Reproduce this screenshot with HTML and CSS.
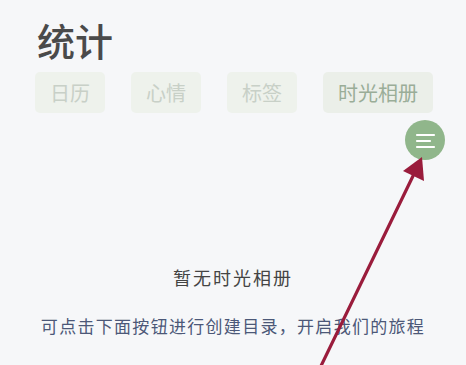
FILE: index.html
```html
<!DOCTYPE html>
<html lang="zh">
<head>
<meta charset="utf-8">
<link rel="stylesheet" href="styles.css">
</head>
<body>
<div class="page">
  <h1 class="title">统计</h1>
  <div class="tabs">
    <div class="tab">日历</div>
    <div class="tab">心情</div>
    <div class="tab">标签</div>
    <div class="tab active">时光相册</div>
  </div>
  <div class="fab-row">
    <div class="fab">
      <svg width="40" height="40" viewBox="0 0 40 40">
        <path d="M12 15H29M12 21H25M12 27H29" stroke="#fff" stroke-width="2.2" stroke-linecap="round" fill="none"/>
      </svg>
    </div>
  </div>
  <div class="empty">
    <div class="empty-title">暂无时光相册</div>
    <div class="empty-hint">可点击下面按钮进行创建目录，开启我们的旅程</div>
  </div>
</div>
<svg class="annot" width="466" height="365" viewBox="0 0 466 365">
  <line x1="320" y1="368" x2="413" y2="176" stroke="#9a1c3c" stroke-width="3.2" stroke-linecap="round"/>
  <polygon points="422,157 424,181 403,171" fill="#9a1c3c"/>
</svg>
</body>
</html>
```
FILE: styles.css
```css
html, body {
  margin: 0;
  padding: 0;
  background: #f6f7f9;
}
body {
  width: 466px;
  height: 365px;
  overflow: hidden;
  position: relative;
  font-family: "Noto Sans CJK SC", "Noto Sans", sans-serif;
}
.page {
  padding: 14px 21px 0 35px;
}
.title {
  margin: 0 0 0 2px;
  font-size: 38px;
  line-height: 52px;
  font-weight: 500;
  color: #4a4a4a;
}
.tabs {
  display: flex;
  gap: 26px;
  margin-top: 6px;
}
.tab {
  height: 41px;
  line-height: 41px;
  padding: 0 15px;
  border-radius: 5px;
  background: #eef2ec;
  color: #c8d0c7;
  font-size: 20px;
}
.tab.active {
  color: #9aad98;
  background: #ebefe9;
}
.fab-row {
  display: flex;
  justify-content: flex-end;
  margin-top: 7px;
}
.fab {
  width: 40px;
  height: 40px;
  border-radius: 50%;
  background: #90b68b;
}
.fab svg {
  display: block;
}
.empty {
  margin-left: -35px;
  margin-right: -21px;
  margin-top: 104px;
  text-align: center;
}
.empty-title {
  font-size: 18px;
  line-height: 26px;
  letter-spacing: 2px;
  color: #444;
}
.empty-hint {
  margin-top: 24px;
  font-size: 17px;
  line-height: 24px;
  letter-spacing: 1.3px;
  color: #4c5878;
}
.annot {
  position: absolute;
  left: 0;
  top: 0;
}
```
